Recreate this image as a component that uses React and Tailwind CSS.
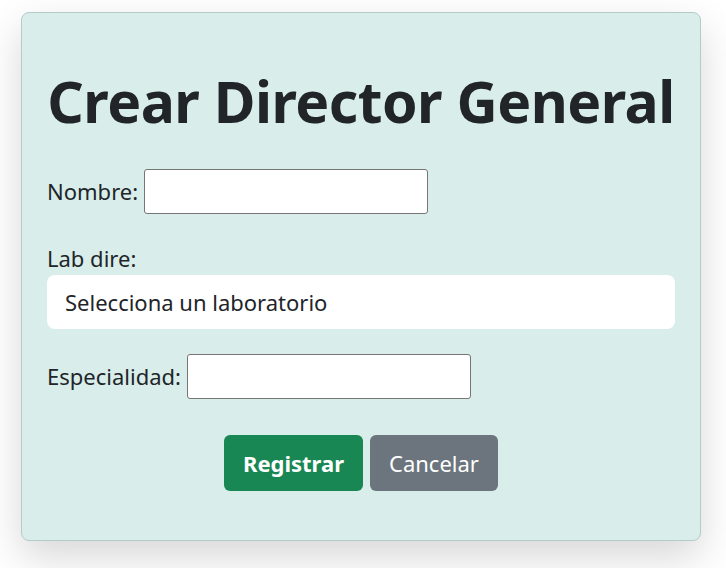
import React from 'react';

export default function App() {
  return (
    <div className="min-h-screen bg-white pt-[12px] pl-[21px] font-['Noto_Sans',sans-serif] text-[#212529]">
      <div className="w-[680px] h-[529px] rounded-lg border border-[#b4cbc6] bg-[#d9eeea] shadow-[0_16px_40px_rgba(0,0,0,0.16)] px-[25px] pt-[48px]">
        <h1 className="text-center text-[57px] font-bold leading-[80px] tracking-[-0.5px]">Crear Director General</h1>

        <form className="mt-[28px] text-[22px]">
          <div className="flex items-center h-[45px]">
            <label className="mr-[6px]">Nombre:</label>
            <input type="text" className="w-[284px] h-[45px] bg-white border border-[#767676] rounded-[3px]" />
          </div>

          <div className="mt-[27px]">
            <label className="block leading-[34px]">Lab dire:</label>
            <select className="w-full h-[54px] bg-white rounded-lg px-[18px] appearance-none outline-none">
              <option>Selecciona un laboratorio</option>
            </select>
          </div>

          <div className="flex items-center h-[45px] mt-[25px]">
            <label className="mr-[6px]">Especialidad:</label>
            <input type="text" className="w-[284px] h-[45px] bg-white border border-[#767676] rounded-[3px]" />
          </div>

          <div className="flex justify-center gap-[7px] mt-[36px]">
            <button type="button" className="w-[139px] h-[56px] rounded-md bg-[#198754] text-white font-bold">Registrar</button>
            <button type="button" className="w-[128px] h-[56px] rounded-md bg-[#6c757d] text-white">Cancelar</button>
          </div>
        </form>
      </div>
    </div>
  );
}
